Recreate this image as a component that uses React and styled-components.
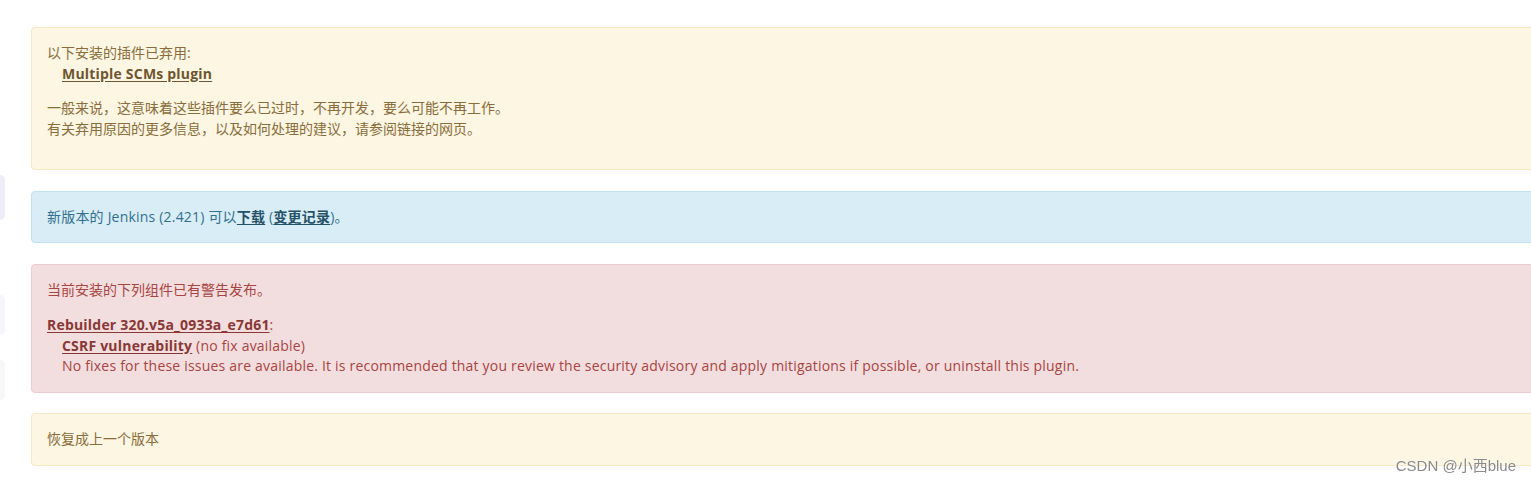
import React from "react";
import styled, { createGlobalStyle } from "styled-components";

const GlobalStyle = createGlobalStyle`
  html, body {
    margin: 0;
    padding: 0;
    background: #ffffff;
    overflow: hidden;
  }
  body {
    font-family: "Open Sans", "Noto Sans CJK SC", sans-serif;
    font-size: 14px;
    line-height: 20.5px;
    letter-spacing: 0.2px;
  }
`;

const variants = {
  warning: { bg: "#fcf6e3", border: "#f8e8c4", color: "#8a6d3b", link: "#6f5630" },
  info: { bg: "#d9edf7", border: "#bde3ef", color: "#31708f", link: "#245269" },
  danger: { bg: "#f2dede", border: "#ebccd1", color: "#a94442", link: "#8a3836" },
};

const Page = styled.div`
  display: flex;
  width: 1560px;
  height: 484px;
`;

const Sidebar = styled.div`
  width: 5px;
  display: flex;
  flex-direction: column;
  padding-top: 175px;
`;

const SideItem = styled.div`
  height: ${(p) => p.$h}px;
  margin-bottom: ${(p) => p.$gap}px;
  background: ${(p) => p.$bg};
  border-radius: 0 6px 6px 0;
`;

const Main = styled.main`
  flex: 1;
  padding: 27px 0 0 26px;
  display: flex;
  flex-direction: column;
  gap: 20.5px;
`;

const Alert = styled.div`
  border: 1px solid ${(p) => variants[p.$variant].border};
  background: ${(p) => variants[p.$variant].bg};
  color: ${(p) => variants[p.$variant].color};
  border-radius: 4px;
  padding: 15px;
  a {
    color: ${(p) => variants[p.$variant].link};
    font-weight: 700;
    text-decoration: underline;
    text-underline-offset: 2px;
  }
`;

const Para = styled.p`
  margin: ${(p) => p.$margin || "0"};
  letter-spacing: ${(p) => (p.$cjk ? "0" : "inherit")};
`;

const IndentList = styled.ul`
  list-style: none;
  margin: 0;
  padding: 0 0 0 15px;
`;

const Watermark = styled.div`
  position: fixed;
  right: 15px;
  bottom: 9px;
  font-family: "Liberation Sans", "Noto Sans CJK SC", sans-serif;
  font-size: 15px;
  line-height: 18px;
  letter-spacing: 0;
  color: #8a8a8a;
  text-shadow: 0 0 2px #ffffff;
`;

export default function App() {
  return (
    <>
      <GlobalStyle />
      <Page>
        <Sidebar>
          <SideItem $h={45} $gap={75} $bg="#eeedf5" />
          <SideItem $h={40} $gap={25} $bg="#f6f6fa" />
          <SideItem $h={40} $gap={75} $bg="#f8f8fb" />
        </Sidebar>
        <Main>
          <Alert $variant="warning">
            <Para $cjk>以下安装的插件已弃用:</Para>
            <IndentList>
              <li>
                <a href="#">Multiple SCMs plugin</a>
              </li>
            </IndentList>
            <Para $cjk $margin="14px 0 15px">
              一般来说，这意味着这些插件要么已过时，不再开发，要么可能不再工作。
              <br />
              有关弃用原因的更多信息，以及如何处理的建议，请参阅链接的网页。
            </Para>
          </Alert>
          <Alert $variant="info">
            <Para>
              新版本的 Jenkins (2.421) 可以<a href="#">下载</a> (<a href="#">变更记录</a>)。
            </Para>
          </Alert>
          <Alert $variant="danger">
            <Para $cjk $margin="0 0 15px">当前安装的下列组件已有警告发布。</Para>
            <Para>
              <a href="#">Rebuilder 320.v5a_0933a_e7d61</a>:
            </Para>
            <IndentList>
              <li>
                <a href="#">CSRF vulnerability</a> (no fix available)
                <br />
                No fixes for these issues are available. It is recommended that you review the security advisory and apply mitigations if possible, or uninstall this plugin.
              </li>
            </IndentList>
          </Alert>
          <Alert $variant="warning">
            <Para $cjk>恢复成上一个版本</Para>
          </Alert>
        </Main>
        <Watermark>CSDN @小西blue</Watermark>
      </Page>
    </>
  );
}
